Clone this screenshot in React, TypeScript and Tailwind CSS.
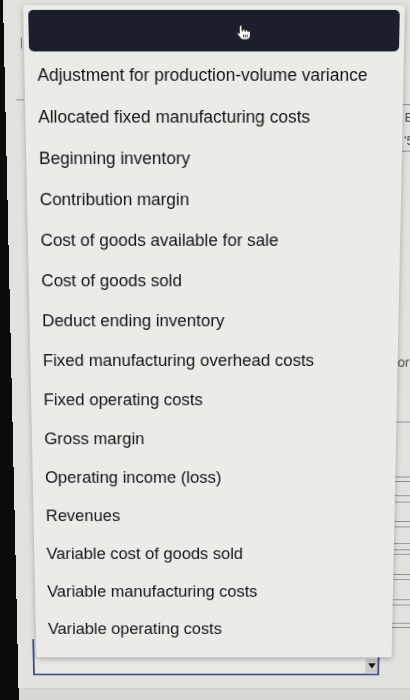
const items = [
  'Adjustment for production-volume variance',
  'Allocated fixed manufacturing costs',
  'Beginning inventory',
  'Contribution margin',
  'Cost of goods available for sale',
  'Cost of goods sold',
  'Deduct ending inventory',
  'Fixed manufacturing overhead costs',
  'Fixed operating costs',
  'Gross margin',
  'Operating income (loss)',
  'Revenues',
  'Variable cost of goods sold',
  'Variable manufacturing costs',
  'Variable operating costs',
]

// hand cursor over the highlighted row
function HandCursor() {
  return (
    <svg width="15" height="18" viewBox="0 0 16 18">
      <path
        d="M5 1c.8 0 1.5.7 1.5 1.5V7h.5v-.5c0-.8.7-1.3 1.4-1.3s1.3.5 1.3 1.3v1h.4V7c0-.7.6-1.2 1.3-1.2s1.3.5 1.3 1.2v1h.3c0-.6.6-1 1.2-1s1.2.4 1.2 1V12c0 2.5-1.8 4.5-4.3 4.5H8c-1.5 0-2.5-.7-3.3-1.8L1.5 10.5c-.4-.6-.2-1.3.4-1.6.5-.3 1.2-.1 1.6.4l0 .7V2.5C3.5 1.7 4.2 1 5 1z"
        fill="#ffffff"
        stroke="#111111"
        strokeWidth="1"
        strokeLinejoin="round"
      />
      <path d="M8 11v3M10 11v3M12 11v3" stroke="#111111" strokeWidth="0.9" />
    </svg>
  )
}

export default function App() {
  return (
    <div className="h-[700px] w-[410px] overflow-hidden bg-[#0b0b0b] font-['Liberation_Sans',Arial,sans-serif]">
      {/* screen photographed at a slight angle */}
      <div className="relative ml-[3px] flex h-[800px] w-[470px] flex-col bg-[#e2e2df] origin-[211px_0px] [transform:perspective(1000px)_rotateX(-6.1deg)]">
        {/* ================= PAGE UNDER THE MENU ================= */}
        <div className="flex h-[747px]">
          <div className="flex w-[398px] flex-col">
            <div className="ml-[17px] mt-[38px] h-[11px] w-px bg-[#6d6d6d]" />
            <div className="ml-[11px] mt-[52px] h-px w-[8px] bg-[#8a8a8a]" />

            {/* select box */}
            <div className="mb-[15px] ml-[16px] mt-auto flex h-[42px] w-[373px] items-end justify-end border-2 border-t-0 border-[#4b4f8e] bg-[#e8e8e5] pb-px">
              <div className="flex h-[16px] w-[13px] items-center justify-center bg-[#cbcbc8]">
                <svg width="8" height="6" viewBox="0 0 8 6">
                  <path d="M0 0h8L4 6z" fill="#111" />
                </svg>
              </div>
            </div>
          </div>

          {/* right column, mostly hidden */}
          <div className="flex flex-1 flex-col text-[#444]">
            <div className="ml-[3px] mt-[106px] flex h-[49px] flex-col border-y border-l border-[#8a8a8a] pl-[2px] text-[13px] leading-[16px]">
              <span className="mt-[5px]">E</span>
              <span className="mt-[8px]">'5</span>
            </div>
            <span className="mt-[216px] text-[14px] leading-[16px] text-[#4a4a4a]">for</span>
            <div className="ml-[3px] mt-[57px] h-px bg-[#8c8c8c]" />
            <div className="ml-[3px] mt-[60px] h-px bg-[#8c8c8c]" />
            <div className="ml-[3px] mt-[4px] h-px bg-[#8c8c8c]" />
            <div className="ml-[3px] mt-[15px] h-px bg-[#8c8c8c]" />
            <div className="ml-[3px] mt-[6px] h-px bg-[#8c8c8c]" />
            <div className="ml-[3px] mt-[21px] h-px bg-[#8c8c8c]" />
            <div className="ml-[3px] mt-[5px] h-px bg-[#8c8c8c]" />
            <div className="ml-[3px] mt-[18px] h-px bg-[#8c8c8c]" />
            <div className="ml-[3px] mt-[6px] h-px bg-[#8c8c8c]" />
            <div className="ml-[3px] mt-[4px] h-px bg-[#8c8c8c]" />
            <div className="ml-[3px] mt-[22px] h-px bg-[#8c8c8c]" />
            <div className="ml-[3px] mt-[5px] h-px bg-[#8c8c8c]" />
            <div className="ml-[3px] mt-[22px] h-px bg-[#8c8c8c]" />
            <div className="ml-[3px] mt-[5px] h-px bg-[#8c8c8c]" />
            <div className="ml-[3px] mt-[20px] h-px bg-[#8c8c8c]" />
            <div className="ml-[3px] mt-[4px] h-px bg-[#8c8c8c]" />
          </div>
        </div>

        <div className="flex-1 border-t border-[#cfcfcb] bg-[#d8d8d5]" />

        {/* ================= OPEN DROPDOWN ================= */}
        <div className="absolute left-[20px] top-[5px] h-[706px] w-[382px] rounded-[3px] bg-[#ebebe8] px-[5px] pt-[5px] shadow-[0_2px_6px_rgba(0,0,0,0.28)]">
          <div className="flex h-[42px] items-center rounded-[5px] bg-[#1b1f2b] pl-[208px] pt-[4px]">
            <HandCursor />
          </div>

          <ul className="mt-[3px]">
            {items.map(item => (
              <li
                key={item}
                className="flex h-[43px] items-center pl-[8px] text-[17.5px] text-[#141414]"
              >
                {item}
              </li>
            ))}
          </ul>
        </div>
      </div>
    </div>
  )
}
